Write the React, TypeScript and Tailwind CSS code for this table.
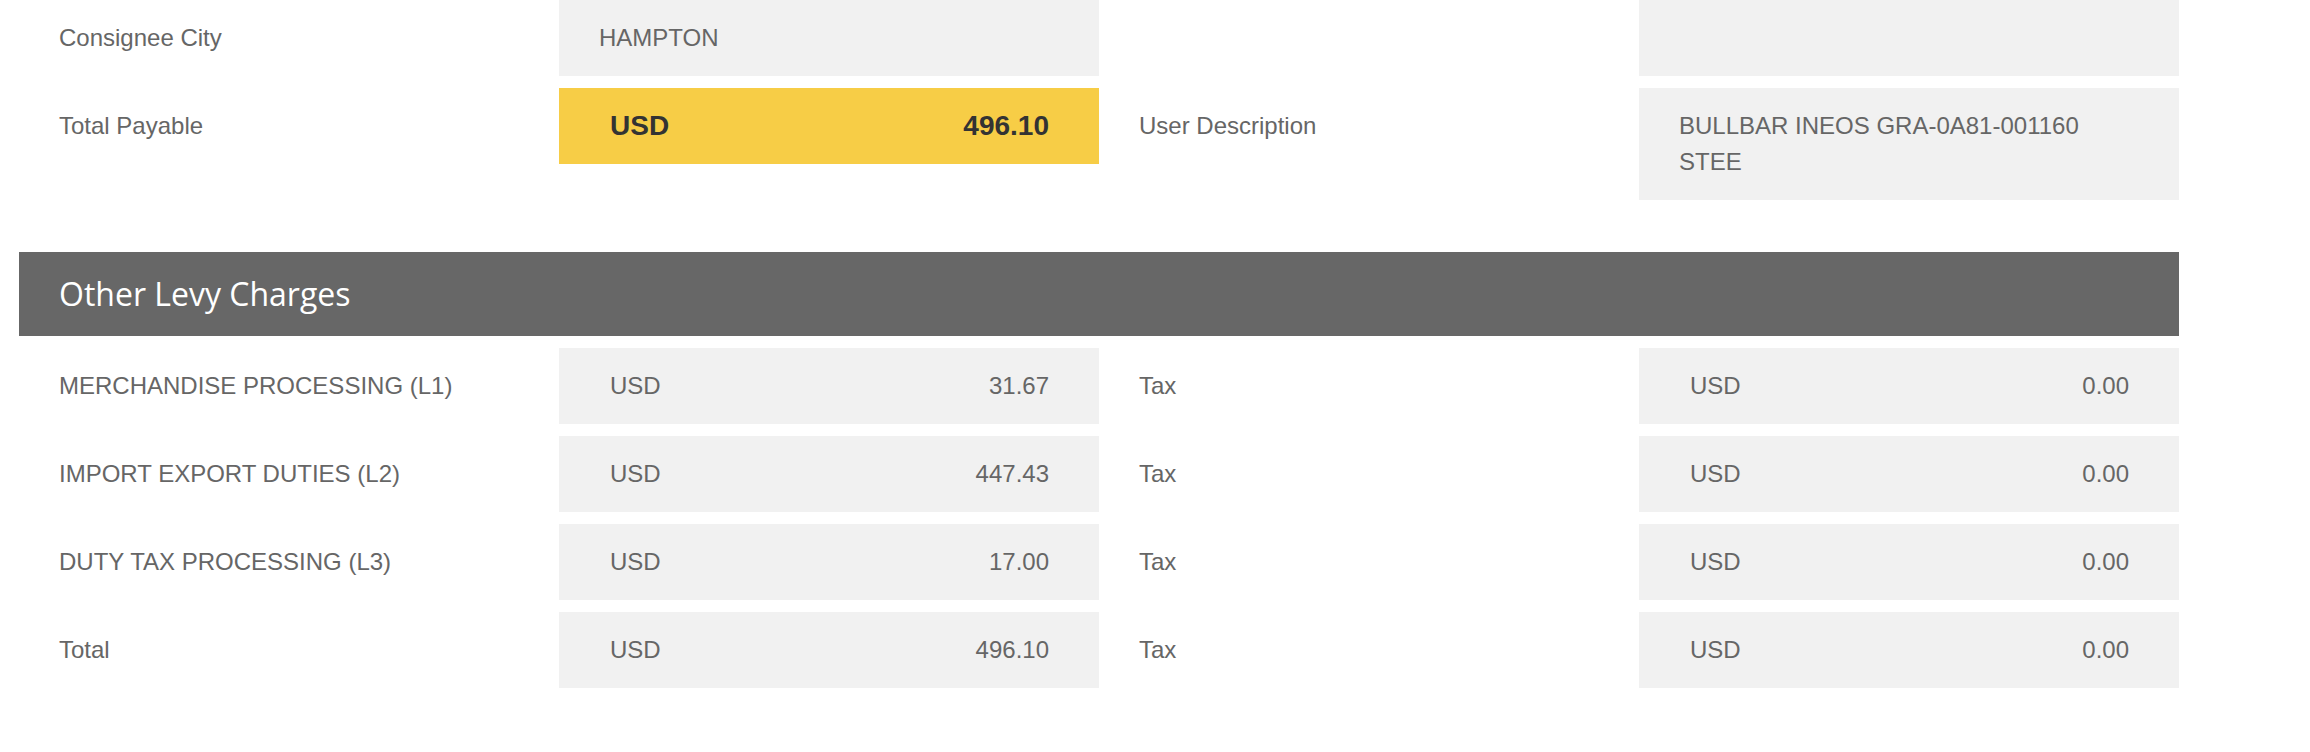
const font = { fontFamily: '"Liberation Sans", Arial, sans-serif' }

function Label({ children }: { children?: React.ReactNode }) {
  return <div className="px-[40px] py-[20px] text-[24px] leading-[36px] text-[#666666]">{children}</div>
}

function Box({ children }: { children?: React.ReactNode }) {
  return (
    <div className="min-h-[76px] bg-[#f1f1f1] px-[40px] py-[20px] text-[24px] leading-[36px] text-[#666666]">
      {children}
    </div>
  )
}

function Amount({ value, highlight }: { value: string; highlight?: boolean }) {
  return (
    <div
      className={
        highlight
          ? "flex h-[76px] items-center justify-between bg-[#f7cd46] pl-[51px] pr-[50px] text-[28px] font-bold leading-[36px] text-[#333333]"
          : "flex h-[76px] items-center justify-between bg-[#f1f1f1] pl-[51px] pr-[50px] text-[24px] leading-[36px] text-[#666666]"
      }
    >
      <span>USD</span>
      <span>{value}</span>
    </div>
  )
}

const levies = [
  { name: "MERCHANDISE PROCESSING (L1)", amount: "31.67", tax: "0.00" },
  { name: "IMPORT EXPORT DUTIES (L2)", amount: "447.43", tax: "0.00" },
  { name: "DUTY TAX PROCESSING (L3)", amount: "17.00", tax: "0.00" },
  { name: "Total", amount: "496.10", tax: "0.00" },
]

export default function App() {
  return (
    <div className="min-h-[752px] bg-white pl-[19px]" style={font}>
      <div className="w-[2160px]">
        <div className="grid grid-cols-4 gap-y-[12px]">
          <Label>Consignee City</Label>
          <Box>HAMPTON</Box>
          <Label />
          <Box />

          <Label>Total Payable</Label>
          <div>
            <Amount value="496.10" highlight />
          </div>
          <Label>User Description</Label>
          <Box>BULLBAR INEOS GRA-0A81-001160 STEE</Box>
        </div>

        <div className="mt-[52px] flex h-[84px] items-center bg-[#676767] px-[40px]">
          <h2
            className="text-[32px] font-normal text-white"
            style={{ fontFamily: '"Open Sans", "Noto Sans", sans-serif' }}
          >
            Other Levy Charges
          </h2>
        </div>

        <div className="mt-[12px] grid grid-cols-4 gap-y-[12px]">
          {levies.map((l) => (
            <div key={l.name} className="contents">
              <Label>{l.name}</Label>
              <Amount value={l.amount} />
              <Label>Tax</Label>
              <Amount value={l.tax} />
            </div>
          ))}
        </div>
      </div>
    </div>
  )
}
